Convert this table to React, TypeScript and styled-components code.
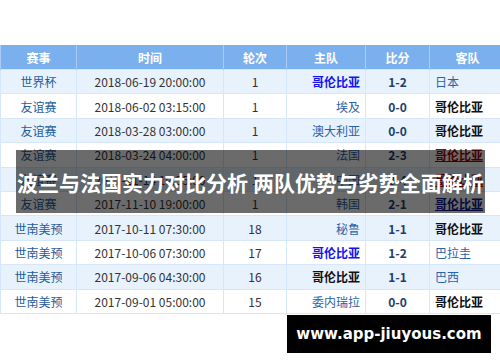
import styled, { createGlobalStyle } from 'styled-components'

const GlobalStyle = createGlobalStyle`
  html, body {
    margin: 0;
    padding: 0;
    background: #ffffff;
  }
  body {
    font-family: "Noto Sans CJK SC", "Noto Sans", sans-serif;
  }
`

const Page = styled.main`
  position: relative;
  width: 500px;
  height: 362px;
  overflow: hidden;
  padding-top: 45px;
  box-sizing: border-box;
`

const Table = styled.table`
  width: 499px;
  border-collapse: collapse;
  table-layout: fixed;
  font-size: 12px;
`

const HeadCell = styled.th<{ $w: number }>`
  width: ${(p) => p.$w}px;
  height: 24px;
  padding: 0;
  background: #7bb0ee;
  color: #ffffff;
  font-weight: bold;
  text-align: center;
  border-left: 1px solid #a9cbf5;
  border-right: 1px solid #a9cbf5;
`

const Row = styled.tr<{ $alt: boolean }>`
  background: ${(p) => (p.$alt ? '#e8f2fd' : '#ffffff')};
`

const Cell = styled.td<{ $align?: string; $color?: string; $bold?: boolean }>`
  height: 23.4px;
  padding: 0 5px;
  text-align: ${(p) => p.$align ?? 'center'};
  color: ${(p) => p.$color ?? '#333333'};
  font-weight: ${(p) => (p.$bold ? 'bold' : 'normal')};
  border: 1px solid #d6e7fb;
  white-space: nowrap;
  overflow: hidden;
`

const Team = styled.span<{ $kind: string }>`
  color: ${(p) =>
    ({ hl: '#1414f0', me: '#111111', red: '#a80000', navy: '#14148c' } as Record<string, string>)[p.$kind] ??
    '#2a62a8'};
  font-weight: ${(p) => (p.$kind === 'plain' ? 'normal' : 'bold')};
  text-decoration: ${(p) => (p.$kind === 'red' || p.$kind === 'navy' ? 'underline' : 'none')};
`

// headline strip laid over the middle of the table
const Banner = styled.div`
  position: absolute;
  left: 16px;
  top: 150px;
  width: 469px;
  height: 63px;
  background: rgba(0, 0, 0, 0.58);
  display: flex;
  align-items: center;
  justify-content: center;
  color: #ffffff;
  font-size: 21px;
  font-weight: bold;
  white-space: nowrap;
`

const Watermark = styled.div`
  position: absolute;
  left: 287px;
  top: 315px;
  width: 204px;
  height: 38px;
  background: #000000;
  color: #ffffff;
  display: flex;
  align-items: center;
  justify-content: center;
  font-family: "DejaVu Sans", sans-serif;
  font-weight: bold;
  font-size: 15px;
  white-space: nowrap;
`

const columns = [
  { label: '赛事', w: 75 },
  { label: '时间', w: 146 },
  { label: '轮次', w: 62 },
  { label: '主队', w: 78 },
  { label: '比分', w: 63 },
  { label: '客队', w: 75 },
]

type Match = {
  cup: string
  time: string
  round: string
  home: [string, string]
  score: string
  away: [string, string]
}

const matches: Match[] = [
  { cup: '世界杯', time: '2018-06-19 20:00:00', round: '1', home: ['哥伦比亚', 'hl'], score: '1-2', away: ['日本', 'plain'] },
  { cup: '友谊赛', time: '2018-06-02 03:15:00', round: '1', home: ['埃及', 'plain'], score: '0-0', away: ['哥伦比亚', 'me'] },
  { cup: '友谊赛', time: '2018-03-28 03:00:00', round: '1', home: ['澳大利亚', 'plain'], score: '0-0', away: ['哥伦比亚', 'me'] },
  { cup: '友谊赛', time: '2018-03-24 04:00:00', round: '1', home: ['法国', 'plain'], score: '2-3', away: ['哥伦比亚', 'red'] },
  { cup: '友谊赛', time: '2017-11-14 19:35:00', round: '1', home: ['中国', 'plain'], score: '0-4', away: ['哥伦比亚', 'red'] },
  { cup: '友谊赛', time: '2017-11-10 19:00:00', round: '1', home: ['韩国', 'plain'], score: '2-1', away: ['哥伦比亚', 'navy'] },
  { cup: '世南美预', time: '2017-10-11 07:30:00', round: '18', home: ['秘鲁', 'plain'], score: '1-1', away: ['哥伦比亚', 'me'] },
  { cup: '世南美预', time: '2017-10-06 07:30:00', round: '17', home: ['哥伦比亚', 'hl'], score: '1-2', away: ['巴拉圭', 'plain'] },
  { cup: '世南美预', time: '2017-09-06 04:30:00', round: '16', home: ['哥伦比亚', 'me'], score: '1-1', away: ['巴西', 'plain'] },
  { cup: '世南美预', time: '2017-09-01 05:00:00', round: '15', home: ['委内瑞拉', 'plain'], score: '0-0', away: ['哥伦比亚', 'me'] },
]

const App = () => {
  return (
    <>
      <GlobalStyle />
      <Page>
        <Table>
          <thead>
            <tr>
              {columns.map((c) => (
                <HeadCell key={c.label} $w={c.w}>
                  {c.label}
                </HeadCell>
              ))}
            </tr>
          </thead>
          <tbody>
            {matches.map((m, i) => (
              <Row key={m.time} $alt={i % 2 === 0}>
                <Cell $color='#1d5c9c'>{m.cup}</Cell>
                <Cell>{m.time}</Cell>
                <Cell $color='#3a2a3a'>{m.round}</Cell>
                <Cell $align='right'>
                  <Team $kind={m.home[1]}>{m.home[0]}</Team>
                </Cell>
                <Cell $color='#1f3d6e' $bold>
                  {m.score}
                </Cell>
                <Cell $align='left'>
                  <Team $kind={m.away[1]}>{m.away[0]}</Team>
                </Cell>
              </Row>
            ))}
          </tbody>
        </Table>

        <Banner>波兰与法国实力对比分析 两队优势与劣势全面解析</Banner>
        <Watermark>www.app-jiuyous.com</Watermark>
      </Page>
    </>
  )
}

export default App
